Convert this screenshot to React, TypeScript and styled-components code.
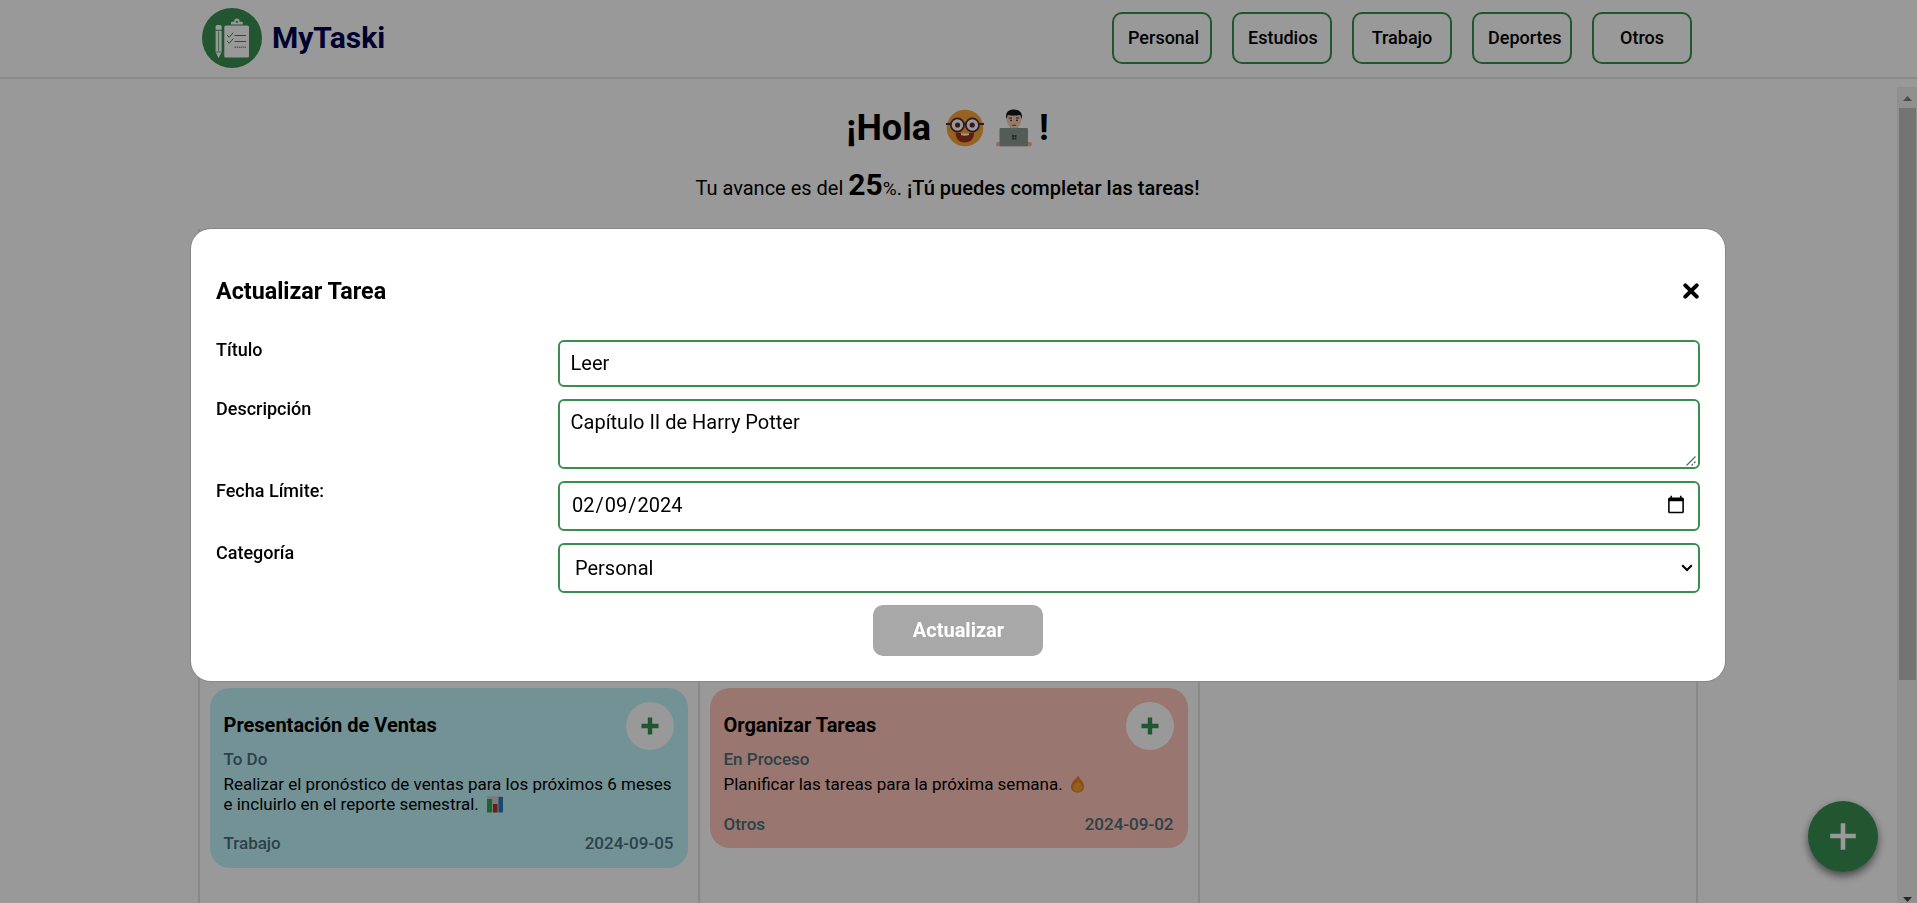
import React from 'react';
import styled, { createGlobalStyle } from 'styled-components';

const GREEN = '#3a8f50';

const GlobalStyle = createGlobalStyle`
  *, *::before, *::after { box-sizing: border-box; }
  body {
    margin: 0;
    background: #fff;
    color: #000;
    font-family: Roboto, sans-serif;
    overflow: hidden;
  }
  h1, h2, h3, p { margin: 0; }
  button, input, select, textarea { font-family: inherit; }
`;

const Page = styled.div`
  height: 903px;
  display: flex;
  flex-direction: column;
  overflow: hidden;
`;

const Header = styled.header`
  flex: none;
  height: 79px;
  padding: 0 225px 2px 202px;
  border-bottom: 2px solid #e6e6e6;
  display: flex;
  align-items: center;
  justify-content: space-between;
`;

const Brand = styled.div`
  display: flex;
  align-items: center;
  gap: 10px;
  padding-top: 1px;
`;

const BrandName = styled.h1`
  font-size: 30px;
  line-height: 36px;
  font-weight: 700;
  color: #000050;
`;

const Nav = styled.nav`
  display: flex;
  gap: 20px;
  padding-top: 1px;
`;

const NavButton = styled.button`
  width: 100px;
  height: 52px;
  padding: 0 14px 2px;
  border: 2px solid ${GREEN};
  border-radius: 10px;
  background: #fff;
  color: #000;
  display: flex;
  align-items: center;
  justify-content: safe center;
  font-size: 18px;
  font-weight: 500;
`;

const Body = styled.div`
  flex: 1;
  min-height: 0;
  display: flex;
`;

const Main = styled.main`
  flex: 1;
  display: flex;
  flex-direction: column;
  align-items: center;
`;

const Greeting = styled.h2`
  margin-top: 27px;
  height: 44px;
  padding-right: 2px;
  display: flex;
  align-items: center;
  font-size: 36px;
  line-height: 44px;
  font-weight: 700;
`;

const GreetingEmoji = styled.span<{ $left: number; $right: number }>`
  display: flex;
  margin: 0 ${(p) => p.$right}px 0 ${(p) => p.$left}px;
`;

const Progress = styled.p`
  margin-top: 17px;
  height: 36px;
  padding-right: 2px;
  font-size: 20px;
  line-height: 36px;
  white-space: pre;

  strong { font-size: 30px; font-weight: 700; }
  small { font-size: 19px; }
  b { font-weight: 500; letter-spacing: 0.04px; }
`;

const Board = styled.section`
  align-self: flex-start;
  margin: 26px 0 0 198px;
  width: 1500px;
  flex: 1;
  display: grid;
  grid-template-columns: 500px 500px 498px;
  border-left: 2px solid #e3e3e3;
`;

const Column = styled.div`
  padding: 459px 10px 0 10px;
  border-right: 2px solid #e3e3e3;
`;

const Card = styled.article<{ $color: string }>`
  width: 478px;
  padding: 14px 14px 14.5px 13.5px;
  border-radius: 20px;
  background: ${(p) => p.$color};
`;

const CardHead = styled.div`
  height: 47px;
  display: flex;
  align-items: flex-start;
  justify-content: space-between;
`;

const CardTitle = styled.h3`
  margin-top: 11px;
  font-size: 20px;
  line-height: 24px;
  font-weight: 700;
`;

const RoundButton = styled.button`
  width: 48px;
  height: 48px;
  padding: 0 1px 1px 0;
  border: 0;
  border-radius: 50%;
  background: #fff;
  display: flex;
  align-items: center;
  justify-content: center;
`;

const CardMeta = styled.p`
  font-size: 17px;
  line-height: 20px;
  font-weight: 500;
  color: #496e78;
`;

const CardText = styled.p`
  margin: 6px 0 19px;
  font-size: 17px;
  line-height: 19.5px;
  white-space: pre-line;

  svg { margin: -2px 0 0 7px; vertical-align: -3px; }
`;

const CardFoot = styled.div`
  display: flex;
  justify-content: space-between;
  padding-right: 0.5px;
`;

const Scrollbar = styled.div`
  width: 20px;
  margin-top: 8px;
  padding: 9px 1px 0 2px;
  background: #f1f1f1;
  display: flex;
  flex-direction: column;
  align-items: center;
`;

const ScrollThumb = styled.div`
  width: 17px;
  height: 572px;
  margin: 7px 0 auto;
  background: #c1c1c1;
`;

const Fab = styled.button`
  position: fixed;
  left: 1808px;
  top: 801px;
  width: 70px;
  height: 71px;
  padding: 0;
  border: 0;
  border-radius: 50%;
  background: ${GREEN};
  box-shadow: 0 4px 8px rgba(0, 0, 0, 0.55);
  display: flex;
  align-items: center;
  justify-content: center;
`;

const Overlay = styled.div`
  position: fixed;
  inset: 0;
  background: rgba(0, 0, 0, 0.4);
  padding: 229px 192px 0 191px;
`;

const Modal = styled.section`
  width: 1534px;
  height: 452px;
  padding: 48px 25px 25px;
  border-radius: 20px;
  background: #fff;
  box-shadow: 0 0 0 1px #888;
  display: flex;
  flex-direction: column;
`;

const ModalHead = styled.div`
  height: 28px;
  display: flex;
  align-items: center;
  justify-content: space-between;
  margin-bottom: 35px;
`;

const ModalTitle = styled.h2`
  font-size: 23.3px;
  line-height: 28px;
  font-weight: 700;
`;

const CloseButton = styled.button`
  padding: 0 1px 0 0;
  border: 0;
  background: none;
  display: flex;
`;

const Field = styled.label<{ $height: number }>`
  height: ${(p) => p.$height}px;
  margin-bottom: 12px;
  display: grid;
  grid-template-columns: 342px 1142px;
`;

const FieldName = styled.span`
  font-size: 18px;
  line-height: 20px;
  font-weight: 500;
`;

const Control = styled.span`
  position: relative;
  display: flex;
`;

const ControlMark = styled.svg<{ $right: number; $bottom: number }>`
  position: absolute;
  right: ${(p) => p.$right}px;
  bottom: ${(p) => p.$bottom}px;
  pointer-events: none;
`;

const Input = styled.input`
  flex: 1;
  padding: 0 10px 2px 10.5px;
  border: 2px solid ${GREEN};
  border-radius: 6px;
  background: #fff;
  font-size: 20px;

  &[type='date'] { padding-left: 11px; }
`;

const TextArea = styled.textarea`
  flex: 1;
  padding: 10px 10px 10px 10.5px;
  border: 2px solid ${GREEN};
  border-radius: 6px;
  font-size: 20px;
  line-height: 23px;
  overflow: hidden;
  resize: none;
`;

const Select = styled.select`
  flex: 1;
  appearance: none;
  padding: 10px 30px 10px 15px;
  border: 2px solid ${GREEN};
  border-radius: 6px;
  background: #fff;
  font-size: 20px;
  color: #000;
`;

const Submit = styled.button`
  align-self: center;
  width: 170px;
  height: 51px;
  padding: 0 0 2px 1px;
  border: 0;
  border-radius: 10px;
  background: #a8a8a8;
  color: #fff;
  font-size: 20px;
  font-weight: 700;
`;

const Logo = () => (
  <svg width="60" height="60" viewBox="0 0 60 60">
    <circle cx="30" cy="30" r="30" fill={GREEN} />
    <rect x="22.300" y="17.500" width="24.700" height="32" rx="1.500" fill="#fff" />
    <path d="M29 16.500v-1.800q0-1 1-1h2.300v-.6a2.600 2.600 0 0 1 5.200 0v.6h2.300q1 0 1 1v1.800z" fill="#fff" />
    <circle cx="34.900" cy="13.800" r="1.100" fill={GREEN} />
    <path d="M13.600 18.500q0-1.500 1.500-1.500h3q1.500 0 1.500 1.500V44l-3 6.300-3-6.300z" fill="#fff" />
    <path d="M13.400 22.300h6.400" stroke={GREEN} strokeWidth="1" />
    <path d="M16.600 23.500v19.500M14 44h5.200" stroke={GREEN} strokeWidth=".8" />
    <path d="M25 27l2.200 2.300 4-4.600M25 33l2.200 2.300 4-4.600M32.500 27.500H44M32.500 33.500H44" stroke={GREEN} strokeWidth="1" fill="none" />
    <path d="M32.500 39.300H44" stroke={GREEN} strokeWidth="1.600" strokeDasharray="1.600 .5" opacity=".65" />
  </svg>
);

const NerdFace = () => (
  <svg width="40" height="38" viewBox="0 0 40 38">
    <circle cx="20" cy="19" r="18.300" fill="#f8a63a" />
    <path d="M10.500 23.500c6 1 13 1 18.500 0 .3 6-3.500 10-9.200 10s-9.300-4-9.300-10z" fill="#9e3217" />
    <path d="M16 24.200h8v1.800q-4 1.500-8 0z" fill="#fff" />
    <path d="M1 15h5M34 15h5M18 15.500q2-1.500 4 0" stroke="#5a2b36" strokeWidth="2.200" fill="none" />
    <circle cx="12.400" cy="16" r="6.600" fill="#fff" stroke="#5a2b36" strokeWidth="1.800" />
    <circle cx="27.400" cy="16" r="6.600" fill="#fff" stroke="#5a2b36" strokeWidth="1.800" />
    <circle cx="12.600" cy="16" r="2.600" fill="#5a2b36" />
    <circle cx="27.200" cy="16" r="2.600" fill="#5a2b36" />
  </svg>
);

const Technologist = () => (
  <svg width="36" height="38" viewBox="0 0 36 38">
    <path d="M14 15h8v6h-8z" fill="#dca98c" />
    <ellipse cx="18" cy="11" rx="7.300" ry="8.500" fill="#f7cdb4" />
    <path d="M10.300 10C9 4 12 .5 18 .5s9 3.500 7.700 9.500l-1.500-4c-4 .8-8.500.8-12.400 0z" fill="#17171f" />
    <path d="M12.800 9h3.200M20 9h3.200" stroke="#333" strokeWidth="1" />
    <circle cx="15" cy="11.300" r=".9" fill="#3a2520" />
    <circle cx="21" cy="11.300" r=".9" fill="#3a2520" />
    <path d="M16 16.300h4" stroke="#b0533f" strokeWidth="1.200" />
    <rect x="0" y="33" width="36" height="4.300" rx="2.100" fill="#f0b99c" />
    <rect x="3.500" y="19" width="28.500" height="18.300" rx="1" fill="#8b9a90" />
    <path d="M16 26h2v2h-2zM18.500 26h2v2h-2zM16 28.500h2v2h-2zM18.500 28.500h2v2h-2z" fill="#36424f" />
  </svg>
);

const ChartEmoji = () => (
  <svg width="18" height="18" viewBox="0 0 18 18">
    <rect x="1" y="1" width="16" height="16" fill="#c9cfd0" />
    <rect x="1" y="4" width="5" height="13.500" fill="#38a650" />
    <rect x="7" y="9" width="4.500" height="8.500" fill="#a93420" />
    <rect x="12.500" y="2" width="4.500" height="15.500" fill="#2c78c4" />
  </svg>
);

const FireEmoji = () => (
  <svg width="16" height="18" viewBox="0 0 16 18">
    <path d="M8 .5c.5 1.500 2 2.500 2.500 4C12 5.500 14 8 14 11.500c0 4-3 6-6.300 6S1 15.500 1 11.700C1 9 2.500 7 4 5.500 5.500 4 7.500 2.500 8 .5z" fill="#e8801c" />
    <path d="M8 5.500c1 2 4.200 3.500 4.200 6.500 0 2.800-2 4.500-4.500 4.500S3 15 3 12.200C3 9.500 6.500 8.500 8 5.500z" fill="#f2a03a" />
  </svg>
);

const PlusIcon = () => (
  <svg width="18" height="18" viewBox="0 0 18 18">
    <path d="M9 .5v17M.5 9h17" stroke={GREEN} strokeWidth="4.400" />
  </svg>
);

const categories = ['Personal', 'Estudios', 'Trabajo', 'Deportes', 'Otros'];

interface Task {
  title: string;
  status: string;
  text: string;
  emoji: React.ReactNode;
  category: string;
  due: string;
  color: string;
}

const tasks: Task[] = [
  {
    title: 'Presentación de Ventas',
    status: 'To Do',
    text: 'Realizar el pronóstico de ventas para los próximos 6 meses\ne incluirlo en el reporte semestral.',
    emoji: <ChartEmoji />,
    category: 'Trabajo',
    due: '2024-09-05',
    color: '#c0f3fa',
  },
  {
    title: 'Organizar Tareas',
    status: 'En Proceso',
    text: 'Planificar las tareas para la próxima semana.',
    emoji: <FireEmoji />,
    category: 'Otros',
    due: '2024-09-02',
    color: '#ffc5b9',
  },
];

const TaskCard = ({ task }: { task: Task }) => (
  <Card $color={task.color}>
    <CardHead>
      <CardTitle>{task.title}</CardTitle>
      <RoundButton aria-label="Avanzar tarea"><PlusIcon /></RoundButton>
    </CardHead>
    <CardMeta>{task.status}</CardMeta>
    <CardText>{task.text}{task.emoji}</CardText>
    <CardFoot>
      <CardMeta>{task.category}</CardMeta>
      <CardMeta>{task.due}</CardMeta>
    </CardFoot>
  </Card>
);

export default function App() {
  return (
    <>
      <GlobalStyle />
      <Page>
        <Header>
          <Brand>
            <Logo />
            <BrandName>MyTaski</BrandName>
          </Brand>
          <Nav>
            {categories.map((c) => <NavButton key={c}>{c}</NavButton>)}
          </Nav>
        </Header>
        <Body>
          <Main>
            <Greeting>
              ¡Hola
              <GreetingEmoji $left={14} $right={11}><NerdFace /></GreetingEmoji>
              <GreetingEmoji $left={0} $right={7}><Technologist /></GreetingEmoji>
              !
            </Greeting>
            <Progress>
              Tu avance es del <strong>25</strong><small>%</small>. <b>¡Tú puedes completar las tareas!</b>
            </Progress>
            <Board>
              <Column><TaskCard task={tasks[0]} /></Column>
              <Column><TaskCard task={tasks[1]} /></Column>
              <Column />
            </Board>
          </Main>
          <Scrollbar>
            <svg width="9" height="5" viewBox="0 0 9 5"><path d="M0 5l4.500-5L9 5z" fill="#7d7d7d" /></svg>
            <ScrollThumb />
            <svg width="9" height="6" viewBox="0 0 9 6"><path d="M0 0h9L4.500 5z" fill="#444" /></svg>
          </Scrollbar>
        </Body>
        <Fab aria-label="Nueva tarea">
          <svg width="26" height="27" viewBox="0 0 26 27">
            <path d="M13 2.500v22M2.500 13h21" stroke="#fff" strokeWidth="4.600" strokeLinecap="square" />
          </svg>
        </Fab>
      </Page>
      <Overlay>
        <Modal>
          <ModalHead>
            <ModalTitle>Actualizar Tarea</ModalTitle>
            <CloseButton aria-label="Cerrar">
              <svg width="16" height="16" viewBox="0 0 16 16">
                <path d="M2.300 2.300l11.400 11.400M13.700 2.300L2.300 13.700" stroke="#000" strokeWidth="4" strokeLinecap="round" />
              </svg>
            </CloseButton>
          </ModalHead>
          <Field $height={47}>
            <FieldName>Título</FieldName>
            <Control><Input defaultValue="Leer" /></Control>
          </Field>
          <Field $height={70}>
            <FieldName>Descripción</FieldName>
            <Control>
              <TextArea defaultValue="Capítulo II de Harry Potter" />
              <ControlMark $right={4} $bottom={3} width="10" height="10" viewBox="0 0 10 10">
                <path d="M.5 9.500l9-9M5.500 9.500l1.500-1.500M8 7l1.500-1.500" stroke="#566" strokeWidth="1.100" />
              </ControlMark>
            </Control>
          </Field>
          <Field $height={50}>
            <FieldName>Fecha Límite:</FieldName>
            <Control><Input type="date" defaultValue="2024-02-09" /></Control>
          </Field>
          <Field $height={50}>
            <FieldName>Categoría</FieldName>
            <Control>
              <Select defaultValue="Personal">
                {categories.map((c) => <option key={c}>{c}</option>)}
              </Select>
              <ControlMark $right={7} $bottom={21} width="12" height="8" viewBox="0 0 12 8">
                <path d="M1.200 1.200L6 6l4.800-4.800" stroke="#000" strokeWidth="2" fill="none" />
              </ControlMark>
            </Control>
          </Field>
          <Submit>Actualizar</Submit>
        </Modal>
      </Overlay>
    </>
  );
}
